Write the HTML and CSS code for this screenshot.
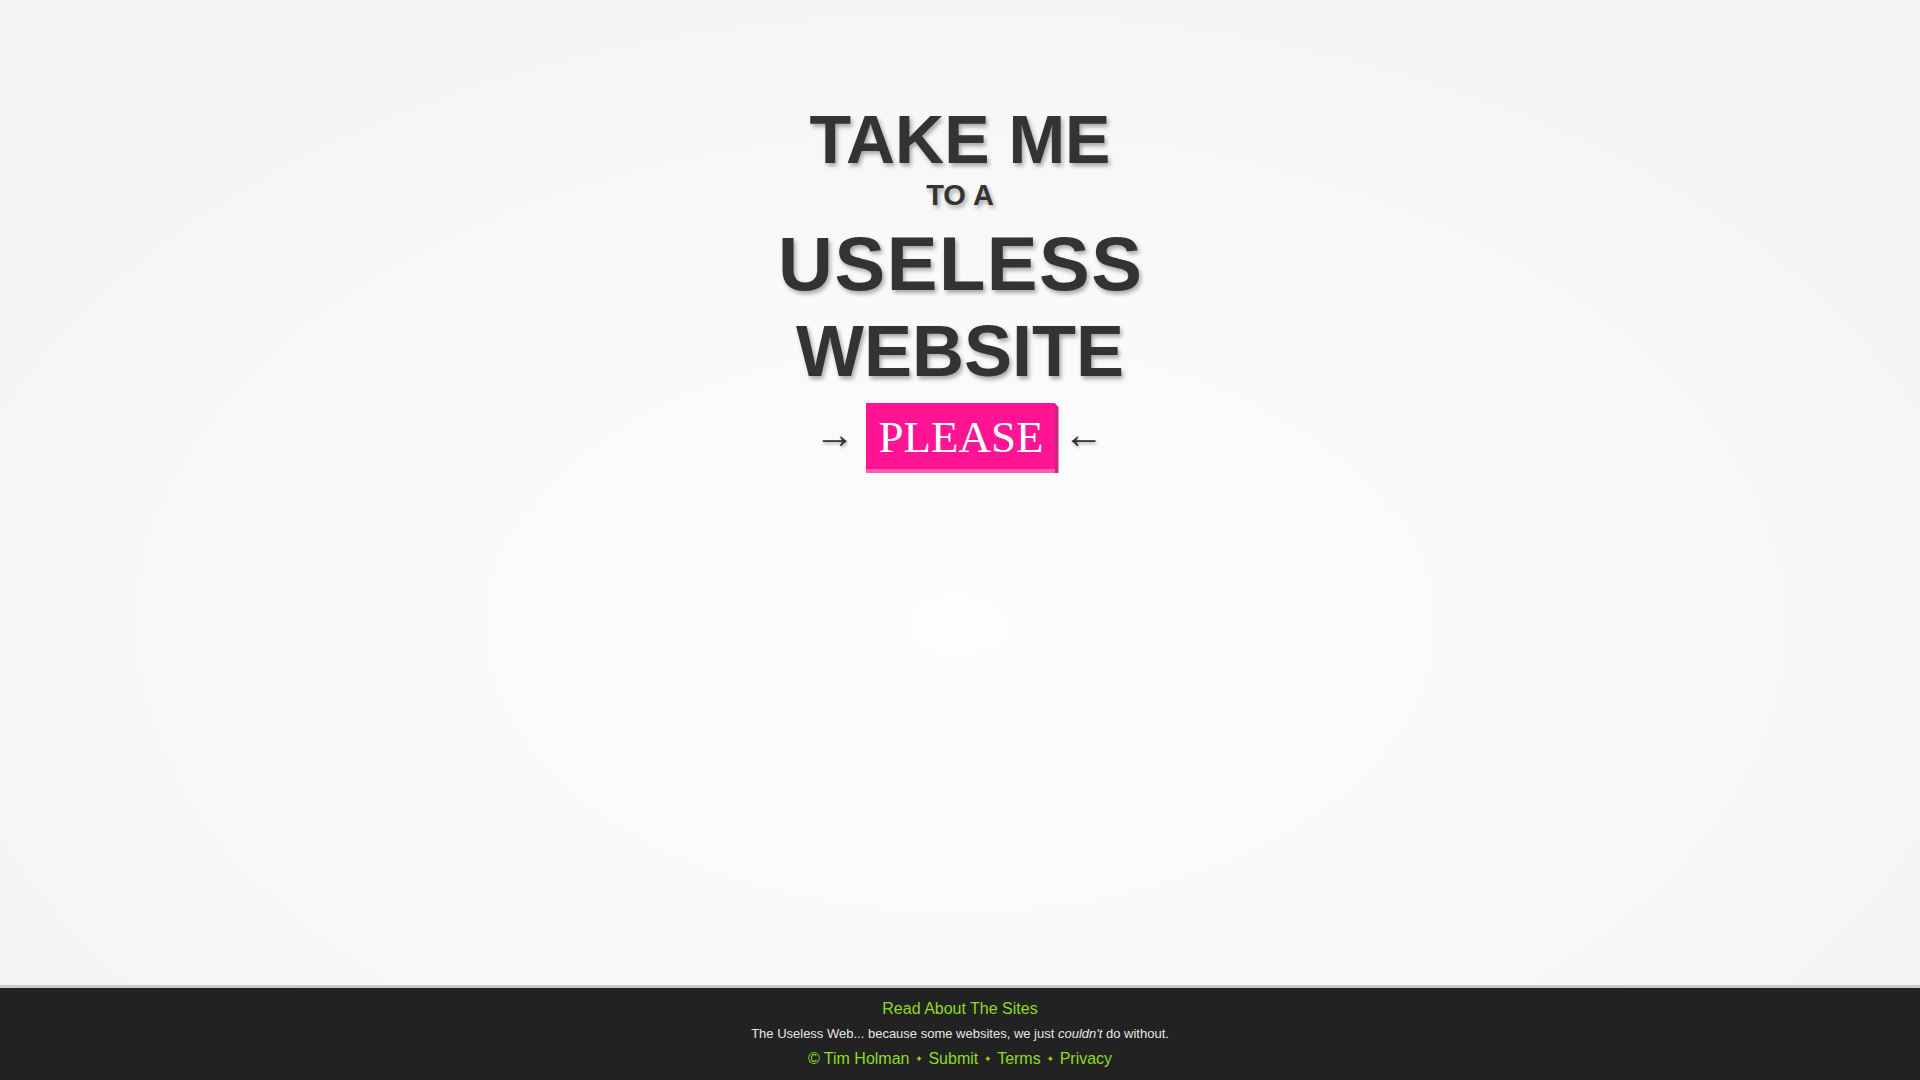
FILE: index.html
```html
<!DOCTYPE html>
<html lang="en">
<head>
<meta charset="utf-8">
<title>The Useless Web</title>
<link rel="stylesheet" href="styles.css">
</head>
<body>
<div class="page">
  <main class="main">
    <h1 class="title">
      <span class="line l1">TAKE ME</span>
      <span class="line l2">TO A</span>
      <span class="line l3">USELESS</span>
      <span class="line l4">WEBSITE</span>
    </h1>
    <div class="cta">
      <span class="arrow arrow-in">&rarr;</span>
      <button class="please" type="button">PLEASE</button>
      <span class="arrow arrow-out">&larr;</span>
    </div>
  </main>
  <footer class="footer">
    <a class="about" href="#">Read About The Sites</a>
    <p class="tagline">The Useless Web... because some websites, we just <em>couldn't</em> do without.</p>
    <nav class="links">
      <a href="#">&copy; Tim Holman</a><span class="sep">&#10022;</span><a href="#">Submit</a><span class="sep">&#10022;</span><a href="#">Terms</a><span class="sep">&#10022;</span><a href="#">Privacy</a>
    </nav>
  </footer>
</div>
</body>
</html>
```

FILE: styles.css
```css
html, body {
  margin: 0;
  padding: 0;
  height: 100%;
}
body {
  font-family: "Liberation Sans", Arial, sans-serif;
  background: #f5f5f5;
}
.page {
  display: flex;
  flex-direction: column;
  min-height: 100vh;
  background: radial-gradient(ellipse 75% 80% at 50% 58%, #fdfdfd 0%, #f9f9f9 45%, #f2f2f2 100%);
}
.main {
  flex: 1;
  display: flex;
  flex-direction: column;
  align-items: center;
  padding-top: 104px;
}
.title {
  margin: 0;
  display: flex;
  flex-direction: column;
  align-items: center;
  color: #333;
  font-weight: bold;
  text-shadow: 2px 3px 4px rgba(0, 0, 0, 0.33);
}
.line {
  display: block;
  white-space: nowrap;
}
.l1 {
  font-size: 68px;
  line-height: 70px;
}
.l2 {
  font-size: 29px;
  line-height: 42px;
}
.l3 {
  font-size: 76px;
  line-height: 96px;
  letter-spacing: 1.5px;
  margin-right: -1.5px;
}
.l4 {
  font-size: 72px;
  line-height: 78px;
  letter-spacing: 0;
}
.cta {
  display: flex;
  align-items: center;
  margin-top: 13px;
  margin-right: 2px;
}
.arrow {
  font-family: "Liberation Serif", "Times New Roman", serif;
  font-size: 40px;
  color: #333;
  text-shadow: 1px 2px 3px rgba(0, 0, 0, 0.3);
  line-height: 1;
  padding-bottom: 6px;
}
.arrow-in {
  margin-right: 12px;
}
.arrow-out {
  margin-left: 5px;
}
.please {
  position: relative;
  border: 0;
  margin: 0 4px 4px 0;
  padding: 2px 11px 0 12px;
  height: 66px;
  background: #ff1493;
  color: #fff;
  font-family: "Liberation Serif", "Times New Roman", serif;
  font-size: 45px;
  line-height: 64px;
  cursor: pointer;
}
.please::before {
  content: "";
  position: absolute;
  top: 0;
  right: -4px;
  width: 4px;
  height: calc(100% + 4px);
  background: #c8267f;
  clip-path: polygon(0 0, 100% 4px, 100% 100%, 0 100%);
}
.please::after {
  content: "";
  position: absolute;
  left: 0;
  bottom: -4px;
  width: 100%;
  height: 4px;
  background: #ff5aab;
}
.footer {
  flex: none;
  height: 92px;
  border-top: 3px solid #c9c9c9;
  background: #222;
  box-sizing: content-box;
  display: flex;
  flex-direction: column;
  align-items: center;
  text-align: center;
}
.footer a {
  color: #8fdc1e;
  text-decoration: none;
}
.about {
  margin-top: 10px;
  font-size: 16px;
  line-height: 22px;
}
.tagline {
  margin: 0;
  color: #e6e6e6;
  font-size: 13px;
  line-height: 28px;
}
.links {
  font-size: 16px;
  line-height: 22px;
}
.sep {
  font-family: "DejaVu Sans", sans-serif;
  color: #8fdc1e;
  font-size: 9px;
  margin: 0 5.7px;
  vertical-align: 2px;
}
```
